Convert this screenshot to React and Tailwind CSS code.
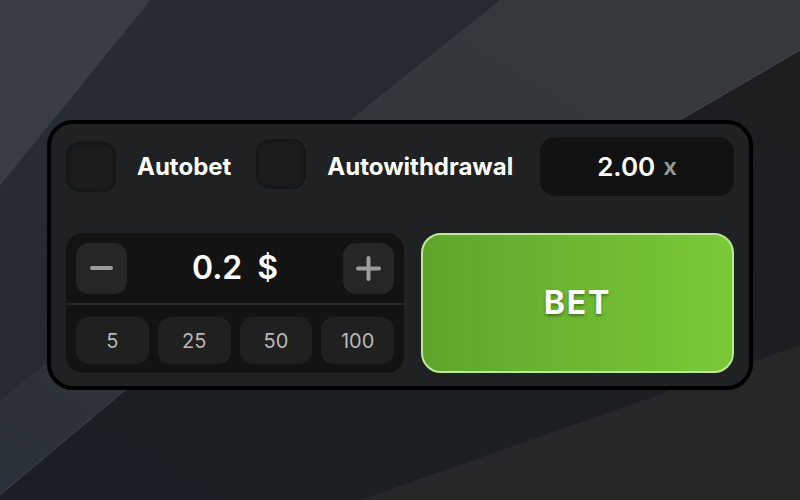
import React, { useState } from "react";

const Background = () => (
    <svg className="absolute inset-0 h-full w-full" viewBox="0 0 800 500" preserveAspectRatio="none">
        <defs>
            <linearGradient id="bandB" x1="1" y1="0" x2="0" y2="1">
                <stop offset="0" stopColor="#36393c" />
                <stop offset="0.55" stopColor="#32363b" />
                <stop offset="1" stopColor="#2b3138" />
            </linearGradient>
            <linearGradient id="bandA" x1="0" y1="0" x2="1" y2="1">
                <stop offset="0" stopColor="#282d34" />
                <stop offset="1" stopColor="#232830" />
            </linearGradient>
            <linearGradient id="bandC" x1="0" y1="1" x2="1" y2="0">
                <stop offset="0" stopColor="#1b1f25" />
                <stop offset="1" stopColor="#1d1e20" />
            </linearGradient>
        </defs>
        <rect width="800" height="500" fill="url(#bandC)" />
        <polygon points="0,0 150,0 0,185" fill="#393e45" />
        <polygon points="150,0 500,0 0,400 0,185" fill="url(#bandA)" />
        <polygon points="500,0 800,0 800,50 680,120 125,390 0,495 0,400" fill="url(#bandB)" />
        <polygon points="800,345 800,500 360,500" fill="#252729" />
        <line x1="150" y1="0" x2="0" y2="185" stroke="#4a5058" strokeOpacity="0.5" strokeWidth="1" />
        <line x1="800" y1="50" x2="680" y2="120" stroke="#5a5e62" strokeOpacity="0.6" strokeWidth="1" />
        <line x1="125" y1="390" x2="0" y2="495" stroke="#4f565e" strokeOpacity="0.6" strokeWidth="1" />
    </svg>
);

const Checkbox = ({ checked, onToggle }) => (
    <button
        onClick={onToggle}
        className="h-[50px] w-[50px] shrink-0 rounded-[13px] border border-[#161616] bg-[#1c1c1c] shadow-[inset_0_0_4px_rgba(0,0,0,0.5)]"
    >
        {checked ? <span className="text-white">✓</span> : null}
    </button>
);

const App = () => {
    const [autobet, setAutobet] = useState(false);
    const [autowithdraw, setAutowithdraw] = useState(false);
    const [amount, setAmount] = useState(0.2);
    const chips = [5, 25, 50, 100];

    return (
        <div className="relative flex h-[500px] w-[800px] items-center justify-center overflow-hidden bg-[#1c1f23] font-['Inter',sans-serif]">
            <Background />
            <div className="relative mt-[10px] flex h-[270px] w-[706px] flex-col justify-between rounded-[26px] border-4 border-black bg-[#202122] px-[15px] py-[13px]">
                <div className="flex h-[59px] items-center">
                    <Checkbox checked={autobet} onToggle={() => setAutobet(!autobet)} />
                    <span className="ml-[21px] text-[24px] font-bold text-white">Autobet</span>
                    <div className="ml-[25px]">
                        <Checkbox checked={autowithdraw} onToggle={() => setAutowithdraw(!autowithdraw)} />
                    </div>
                    <span className="ml-[21px] text-[24px] font-bold text-white">Autowithdrawal</span>
                    <div className="ml-auto flex h-[59px] w-[194px] items-center justify-center gap-2 rounded-[15px] bg-[#121212]">
                        <span className="text-[26px] font-semibold text-white">2.00</span>
                        <span className="text-[24px] font-semibold text-[#9a9a9a]">x</span>
                    </div>
                </div>
                <div className="flex h-[140px] gap-[17px]">
                    <div className="flex w-[338px] flex-col rounded-[17px] bg-[#131313]">
                        <div className="flex h-[70px] items-center justify-between px-[10px]">
                            <button
                                onClick={() => setAmount(Math.max(0.1, +(amount - 0.1).toFixed(1)))}
                                className="flex h-[51px] w-[51px] items-center justify-center rounded-[13px] bg-[#262626]"
                            >
                                <span className="h-[4px] w-[23px] rounded-full bg-[#9c9c9c]" />
                            </button>
                            <div className="flex items-center gap-[15px] text-[32px] font-semibold text-white">
                                <span>{amount}</span>
                                <span>$</span>
                            </div>
                            <button
                                onClick={() => setAmount(+(amount + 0.1).toFixed(1))}
                                className="flex h-[51px] w-[51px] items-center justify-center rounded-[13px] bg-[#262626]"
                            >
                                <svg width="25" height="25" viewBox="0 0 25 25">
                                    <path d="M12.5 2v21M2 12.5h21" stroke="#9c9c9c" strokeWidth="4" strokeLinecap="round" />
                                </svg>
                            </button>
                        </div>
                        <div className="h-[2px] bg-[#262626]" />
                        <div className="grid flex-1 grid-cols-4 gap-[9px] px-[10px] pt-[12px] pb-[9px]">
                            {chips.map((c) => (
                                <button
                                    key={c}
                                    onClick={() => setAmount(c)}
                                    className="rounded-[13px] bg-[#202020] text-[20px] text-[#b8b8b8]"
                                >
                                    {c}
                                </button>
                            ))}
                        </div>
                    </div>
                    <button className="flex flex-1 items-center justify-center rounded-[20px] border-2 border-[#bde89a] bg-gradient-to-r from-[#5fa52b] to-[#7bc936]">
                        <span className="text-[32px] font-bold tracking-[0.06em] text-white [text-shadow:0_2px_3px_rgba(0,0,0,0.35)]">BET</span>
                    </button>
                </div>
            </div>
        </div>
    );
};

export default App;
